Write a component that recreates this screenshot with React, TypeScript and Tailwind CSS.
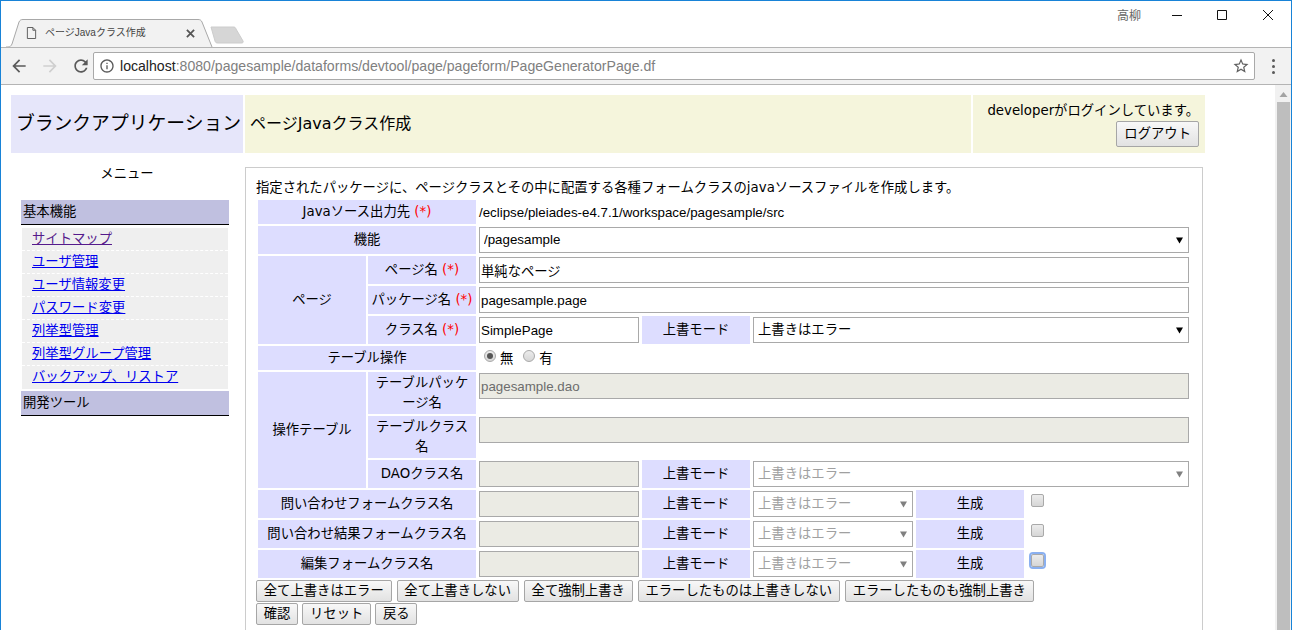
import type { ReactNode } from "react";

const wideFont = "font-['DejaVu_Sans','Noto_Sans_CJK_JP',sans-serif]";
const labelCell = "bg-[#ddddff] flex items-center justify-center text-center px-[2px] leading-[20px] " + wideFont;
const fieldCell = "flex items-center px-[1px]";
const fieldBox = "block w-full h-[26px] border border-[#a9a9a9] px-[1px] outline-none";
const pushBtn =
  "h-[22px] px-[6.8px] border border-[#a6a6a6] rounded-[2px] bg-gradient-to-b from-[#f8f8f8] to-[#e2e2e2] text-[13.33px] leading-none whitespace-nowrap";

const menuLinks = [
  "サイトマップ",
  "ユーザ管理",
  "ユーザ情報変更",
  "パスワード変更",
  "列挙型管理",
  "列挙型グループ管理",
  "バックアップ、リストア",
];

function Icon({ d, className }: { d: string; className: string }) {
  return (
    <svg viewBox="0 0 24 24" className={className} fill="currentColor">
      <path d={d} />
    </svg>
  );
}

function Req() {
  return <span className="text-[#ff0000]"> (*)</span>;
}

function Label({ className, children }: { className?: string; children: ReactNode }) {
  return <div className={labelCell + " " + (className ?? "")}>{children}</div>;
}

function TextField({ value, disabled }: { value?: string; disabled?: boolean }) {
  return (
    <input
      readOnly
      disabled={disabled}
      value={value ?? ""}
      className={fieldBox + (disabled ? " bg-[#ebebe4] text-[#6d6d6d]" : " bg-white text-black")}
    />
  );
}

function SelectField({ value, disabled }: { value: string; disabled?: boolean }) {
  return (
    <div className="relative w-full">
      <select
        disabled={disabled}
        defaultValue={value}
        className={
          "block w-full h-[26px] appearance-none border border-[#a9a9a9] bg-white pl-[4px] outline-none " +
          (disabled ? "text-[#a0a0a0]" : "text-black")
        }
      >
        <option>{value}</option>
      </select>
      <svg
        viewBox="0 0 7 7"
        className={"absolute right-[6px] top-[10px] w-[7px] h-[7px] " + (disabled ? "text-[#808080]" : "text-black")}
        fill="currentColor"
      >
        <path d="M0 0.5h7L3.5 6.5z" />
      </svg>
    </div>
  );
}

function Check({ focused }: { focused?: boolean }) {
  return (
    <div className="pl-[5px] pt-[4px]">
      <div
        className={
          "w-[13px] h-[13px] rounded-[2px] border border-[#a9a9a9] bg-gradient-to-b from-[#ececec] to-[#d6d6d6] " +
          (focused ? "outline-2 outline-[#8ab0f0]" : "")
        }
      />
    </div>
  );
}

function Radio({ checked }: { checked?: boolean }) {
  return (
    <span className="w-[12px] h-[12px] -mt-[4px] rounded-full border border-[#a9a9a9] bg-gradient-to-b from-[#ececec] to-[#d6d6d6] flex items-center justify-center">
      {checked && <span className="w-[6px] h-[6px] rounded-full bg-[#555555]" />}
    </span>
  );
}

function ChromeBar() {
  return (
    <div className="shrink-0">
      {/* Tab strip */}
      <div className="h-[46px] bg-white flex items-end relative">
        <div className="relative w-[208px] h-[28px] ml-[5px] text-[#444444]">
          <svg viewBox="0 0 208 28" className="absolute inset-0 w-[208px] h-[28px]">
            <path d="M0 28H2C4 28 5 27 6 25L13 3C14 1 15 0.5 17 0.5H192C194 0.5 195 1 196 3L206 28" fill="#f2f2f2" stroke="#a8a8a8" />
          </svg>
          <svg viewBox="0 0 12 14" className="absolute left-[20px] top-[7px] w-[11px] h-[14px]" fill="none" stroke="#555555">
            <path d="M1.5 1H7.5L10.5 4V13H1.5Z M7.5 1V4H10.5" />
          </svg>
          <span className="absolute left-[39px] top-[6px] text-[10px] leading-[16px] whitespace-nowrap">ページJavaクラス作成</span>
          <svg viewBox="0 0 10 10" className="absolute left-[180px] top-[10px] w-[9px] h-[9px]" stroke="#555555" strokeWidth="2">
            <path d="M1 1L9 9M9 1L1 9" />
          </svg>
        </div>
        <svg viewBox="0 0 36 18" className="w-[36px] h-[18px] -ml-[4px] mb-[3px]">
          <path d="M1 1H23C25 1 25.500 1.500 26 3L33 15C33.500 16.500 33 17 31 17H8C6 17 5.500 16.500 5 15Z" fill="#d6d6d6" stroke="#cccccc" />
        </svg>
        <span className="absolute left-[1116px] top-[7px] text-[12px] leading-[16px] text-[#666666]">高柳</span>
        {/* Window controls */}
        <svg viewBox="0 0 102 14" className="absolute left-[1171px] top-[7px] w-[102px] h-[14px]" fill="none" stroke="#111111">
          <path d="M0 7.500H10" />
          <path d="M45.500 2.500H54.500V11.500H45.500Z" />
          <path d="M91 2L101 12M101 2L91 12" />
        </svg>
      </div>
      {/* Toolbar */}
      <div className="h-[36px] bg-[#f2f2f2] border-t border-b border-[#b4b4b4] box-content flex items-center text-[#5a5a5a]">
        <div className="w-[92px] flex items-center pl-[8px] gap-[11px] shrink-0">
          <Icon className="w-[20px] h-[20px]" d="M20 11H7.830l5.590-5.590L12 4l-8 8 8 8 1.410-1.410L7.830 13H20v-2z" />
          <Icon className="w-[20px] h-[20px] text-[#cfcfcf] -scale-x-100" d="M20 11H7.830l5.590-5.590L12 4l-8 8 8 8 1.410-1.410L7.830 13H20v-2z" />
          <Icon className="w-[20px] h-[20px]" d="M17.650 6.350C16.200 4.900 14.210 4 12 4c-4.420 0-7.990 3.580-7.990 8s3.570 8 7.990 8c3.730 0 6.840-2.550 7.730-6h-2.080c-.820 2.330-3.040 4-5.650 4-3.310 0-6-2.690-6-6s2.690-6 6-6c1.660 0 3.140.690 4.220 1.780L13 11h7V4l-2.350 2.350z" />
        </div>
        <div className="w-[1162px] h-[28px] bg-white border border-[#a9a9a9] rounded-[2px] flex items-center shrink-0 pl-[5px] pr-[4px]">
          <Icon className="w-[16px] h-[16px] mr-[5px]" d="M11 7h2v2h-2zm0 4h2v6h-2zm1-9C6.480 2 2 6.480 2 12s4.480 10 10 10 10-4.480 10-10S17.520 2 12 2zm0 18c-4.410 0-8-3.590-8-8s3.590-8 8-8 8 3.590 8 8-3.590 8-8 8z" />
          <span className="flex-1 text-[14.1px] leading-[18px] text-[#808080] whitespace-nowrap">
            <span className="text-[#222222]">localhost</span>:8080/pagesample/dataforms/devtool/page/pageform/PageGeneratorPage.df
          </span>
          <Icon className="w-[18px] h-[18px] text-[#606060]" d="M22 9.240l-7.190-.620L12 2 9.190 8.630 2 9.240l5.460 4.730L5.820 21 12 17.270 18.180 21l-1.630-7.030L22 9.240zM12 15.400l-3.760 2.270 1-4.280-3.320-2.880 4.380-.380L12 6.100l1.710 4.040 4.380.380-3.320 2.880 1 4.280L12 15.400z" />
        </div>
        <div className="flex-1 flex flex-col items-center gap-[3px]">
          <span className="w-[3px] h-[3px] rounded-full bg-[#5a5a5a]" />
          <span className="w-[3px] h-[3px] rounded-full bg-[#5a5a5a]" />
          <span className="w-[3px] h-[3px] rounded-full bg-[#5a5a5a]" />
        </div>
      </div>
    </div>
  );
}

function Sidebar() {
  return (
    <div className="w-[232px] shrink-0">
      <div className="text-center leading-[20px] pt-[11px] pb-[16px]">メニュー</div>
      <div className="mx-[10px] w-[208px]">
        <div className="h-[25px] bg-[#c0c0e0] border-b border-black pl-[2px] leading-[23px]">基本機能</div>
        <div className="mx-[1px] mt-[3px] bg-[#efefef]">
          {menuLinks.map((m, i) => (
            <div key={m} className={"h-[23px] pl-[10px] leading-[22px] " + (i < menuLinks.length - 1 ? "border-b border-dashed border-white" : "")}>
              <a className={"underline " + (i === 0 ? "text-[#551a8b]" : "text-[#0000ee]")} href="#">
                {m}
              </a>
            </div>
          ))}
        </div>
        <div className="h-[25px] mt-[2px] bg-[#c0c0e0] border-b border-black pl-[2px] leading-[23px]">開発ツール</div>
      </div>
    </div>
  );
}

function FormCard() {
  return (
    <div className="w-[958px] ml-[2px] mt-[14px] border border-[#cccccc] px-[10px] pt-[10px] pb-[10px] bg-white">
      <div className={"leading-[20px] whitespace-nowrap " + wideFont}>
        指定されたパッケージに、ページクラスとその中に配置する各種フォームクラスのjavaソースファイルを作成します。
      </div>
      <div className="grid grid-cols-[108px_108px_162px_108px_162px_108px_164px] grid-rows-[24px_28px_28px_28px_28px_24px_42px_42px_28px_28px_28px_28px] gap-[2px] p-[2px]">
        <Label className="col-span-2">
          <span>Javaソース出力先<Req /></span>
        </Label>
        <div className="col-span-5 flex items-center pl-[1px] pt-[1px]">/eclipse/pleiades-e4.7.1/workspace/pagesample/src</div>

        <Label className="col-span-2">機能</Label>
        <div className={fieldCell + " col-span-5"}>
          <SelectField value="/pagesample" />
        </div>

        <Label className="row-span-3">ページ</Label>
        <Label>
          <span>ページ名<Req /></span>
        </Label>
        <div className={fieldCell + " col-span-5"}>
          <TextField value="単純なページ" />
        </div>
        <Label>
          <span className="whitespace-nowrap">パッケージ名<Req /></span>
        </Label>
        <div className={fieldCell + " col-span-5"}>
          <TextField value="pagesample.page" />
        </div>
        <Label>
          <span>クラス名<Req /></span>
        </Label>
        <div className={fieldCell}>
          <TextField value="SimplePage" />
        </div>
        <Label>上書モード</Label>
        <div className={fieldCell + " col-span-3"}>
          <SelectField value="上書きはエラー" />
        </div>

        <Label className="col-span-2">テーブル操作</Label>
        <div className="col-span-5 flex items-center pl-[6px]">
          <Radio checked />
          <span className="ml-[4px] mr-[10px] mt-[2px]">無</span>
          <Radio />
          <span className="ml-[4px] mt-[2px]">有</span>
        </div>

        <Label className="row-span-3">操作テーブル</Label>
        <Label>テーブルパッケージ名</Label>
        <div className="col-span-5 px-[1px] pt-[1px]">
          <TextField disabled value="pagesample.dao" />
        </div>
        <Label>テーブルクラス名</Label>
        <div className="col-span-5 px-[1px] pt-[1px]">
          <TextField disabled />
        </div>
        <Label>DAOクラス名</Label>
        <div className={fieldCell}>
          <TextField disabled />
        </div>
        <Label>上書モード</Label>
        <div className={fieldCell + " col-span-3"}>
          <SelectField disabled value="上書きはエラー" />
        </div>

        {["問い合わせフォームクラス名", "問い合わせ結果フォームクラス名", "編集フォームクラス名"].map((name, i) => (
          <div key={name} className="contents">
            <Label className="col-span-2">{name}</Label>
            <div className={fieldCell}>
              <TextField disabled />
            </div>
            <Label>上書モード</Label>
            <div className={fieldCell}>
              <SelectField disabled value="上書きはエラー" />
            </div>
            <Label>生成</Label>
            <Check focused={i === 2} />
          </div>
        ))}
      </div>
      <div className="flex gap-[5px] mb-[1px]">
        <button className={pushBtn}>全て上書きはエラー</button>
        <button className={pushBtn}>全て上書きしない</button>
        <button className={pushBtn}>全て強制上書き</button>
        <button className={pushBtn}>エラーしたものは上書きしない</button>
        <button className={pushBtn}>エラーしたものも強制上書き</button>
      </div>
      <div className="flex gap-[4px]">
        <button className={pushBtn}>確認</button>
        <button className={pushBtn}>リセット</button>
        <button className={pushBtn}>戻る</button>
      </div>
    </div>
  );
}

export default function App() {
  return (
    <div className="w-[1292px] h-[630px] overflow-hidden border-t border-l border-r border-[#1883d7] bg-white flex flex-col text-black text-[13.33px] font-['Liberation_Sans','Noto_Sans_CJK_JP',sans-serif]">
      <ChromeBar />
      <div className="flex-1 min-h-0 flex">
        <div className="w-[1274px] shrink-0 overflow-hidden pl-[10px] pt-[10px]">
          {/* Header */}
          <div className="flex gap-[2px] h-[58px]">
            <div className="w-[232px] bg-[#e6e6fa] flex items-center pl-[5px] text-[18.8px] whitespace-nowrap">ブランクアプリケーション</div>
            <div className={"w-[726px] bg-[#f5f5dc] flex items-center pl-[5px] text-[16px] " + wideFont}>ページJavaクラス作成</div>
            <div className={"w-[232px] bg-[#f5f5dc] flex flex-col items-end pr-[6px] pt-[6px] " + wideFont}>
              <div className="leading-[20px] whitespace-nowrap">developerがログインしています。</div>
              <button className="h-[26px] px-[7px] border border-[#a6a6a6] rounded-[2px] bg-gradient-to-b from-[#f8f8f8] to-[#e2e2e2] leading-none">
                ログアウト
              </button>
            </div>
          </div>
          <div className="flex items-start">
            <Sidebar />
            <FormCard />
          </div>
        </div>
        {/* Scrollbar */}
        <div className="flex-1 bg-[#f1f1f1] flex flex-col items-center">
          <svg viewBox="0 0 8 5" className="w-[9px] h-[5px] mt-[7px] mb-[5px] text-[#a3a3a3]" fill="currentColor">
            <path d="M4 0L8 5H0z" />
          </svg>
          <div className="flex-1 w-[13px] bg-[#bebebe]" />
        </div>
      </div>
    </div>
  );
}
